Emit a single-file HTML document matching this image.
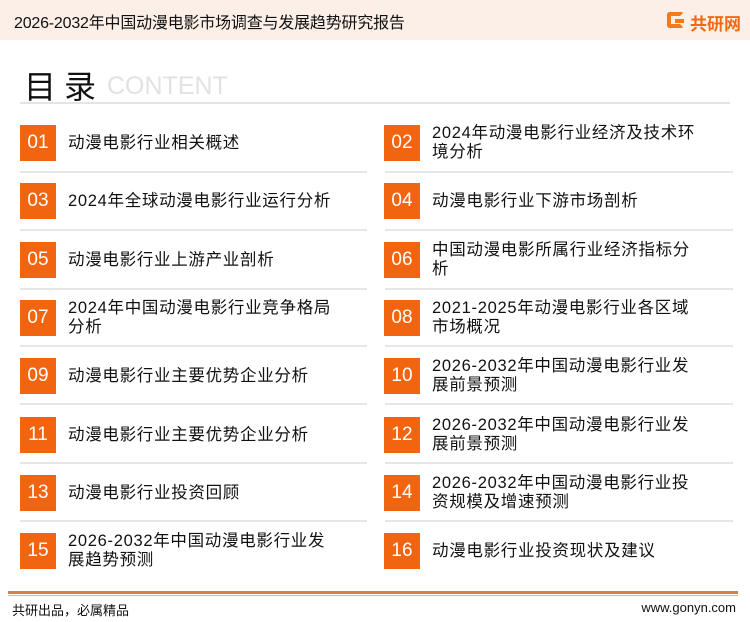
<!DOCTYPE html>
<html><head><meta charset="utf-8"><style>
*{margin:0;padding:0;box-sizing:border-box}
body{width:750px;height:622px;background:#fff;position:relative;overflow:hidden;font-family:"Liberation Sans","Noto Sans CJK SC",sans-serif;color:#111}
.hdr{position:absolute;left:0;top:0;width:750px;height:40px;background:#fcefe8}
.ttl{position:absolute;left:14px;top:9px;font-size:16px;letter-spacing:-0.2px}
.logo{position:absolute;left:690px;top:10px;font-size:17px;font-weight:bold;color:#f06a14}
.g{position:absolute;left:667px;top:12px;width:17px;height:16px;border:4px solid #f07a1c;border-radius:3px;border-right-color:transparent}
.g:after{content:"";position:absolute;left:4px;top:3px;width:9px;height:4px;background:#f07a1c}
.ml{position:absolute;left:24px;top:62px;font-size:32px;letter-spacing:8px}
.ct{position:absolute;left:107px;top:72px;font-size:25px;color:#e2e2e2}
.hl{position:absolute;left:20px;top:102px;width:710px;height:2px;background:#e4e4e4}
.box{position:absolute;width:36px;height:36px;background:#f26510;color:#fff;font-size:19px;text-align:center;line-height:36px}
.tx{position:absolute;font-size:16.5px;line-height:19px;width:270px;letter-spacing:0.7px}
.sep{position:absolute;height:2px;background:#e6e6e6}
.fl{position:absolute;left:8px;top:591px;width:730px;height:3px;background:#d4824a}
.fl2{position:absolute;left:8px;top:595px;width:730px;height:1px;background:#e8b892}
.ft{position:absolute;left:12px;top:600px;font-size:13px}
.fr{position:absolute;right:14px;top:600px;font-size:13px}
</style></head><body>
<div class="hdr"></div>
<div class="ttl">2026-2032年中国动漫电影市场调查与发展趋势研究报告</div>
<div class="g"></div><div class="logo">共研网</div>
<div class="ml">目录</div><div class="ct">CONTENT</div>
<div class="hl"></div>

<div class="box" style="left:20px;top:125px">01</div><div class="tx" style="left:68px;top:134px">动漫电影行业相关概述</div>
<div class="box" style="left:384px;top:125px">02</div><div class="tx" style="left:432px;top:124px">2024年动漫电影行业经济及技术环境分析</div>
<div class="sep" style="left:20px;width:347px;top:171px"></div><div class="sep" style="left:385px;width:348px;top:171px"></div>

<div class="box" style="left:20px;top:183px">03</div><div class="tx" style="left:68px;top:192px">2024年全球动漫电影行业运行分析</div>
<div class="box" style="left:384px;top:183px">04</div><div class="tx" style="left:432px;top:192px">动漫电影行业下游市场剖析</div>
<div class="sep" style="left:20px;width:347px;top:229px"></div><div class="sep" style="left:385px;width:348px;top:229px"></div>

<div class="box" style="left:20px;top:242px">05</div><div class="tx" style="left:68px;top:251px">动漫电影行业上游产业剖析</div>
<div class="box" style="left:384px;top:242px">06</div><div class="tx" style="left:432px;top:241px">中国动漫电影所属行业经济指标分析</div>
<div class="sep" style="left:20px;width:347px;top:288px"></div><div class="sep" style="left:385px;width:348px;top:288px"></div>

<div class="box" style="left:20px;top:300px">07</div><div class="tx" style="left:68px;top:299px">2024年中国动漫电影行业竞争格局分析</div>
<div class="box" style="left:384px;top:300px">08</div><div class="tx" style="left:432px;top:299px">2021-2025年动漫电影行业各区域市场概况</div>
<div class="sep" style="left:20px;width:347px;top:345px"></div><div class="sep" style="left:385px;width:348px;top:345px"></div>

<div class="box" style="left:20px;top:358px">09</div><div class="tx" style="left:68px;top:367px">动漫电影行业主要优势企业分析</div>
<div class="box" style="left:384px;top:358px">10</div><div class="tx" style="left:432px;top:357px">2026-2032年中国动漫电影行业发展前景预测</div>
<div class="sep" style="left:20px;width:347px;top:403px"></div><div class="sep" style="left:385px;width:348px;top:403px"></div>

<div class="box" style="left:20px;top:417px">11</div><div class="tx" style="left:68px;top:426px">动漫电影行业主要优势企业分析</div>
<div class="box" style="left:384px;top:417px">12</div><div class="tx" style="left:432px;top:416px">2026-2032年中国动漫电影行业发展前景预测</div>
<div class="sep" style="left:20px;width:347px;top:462px"></div><div class="sep" style="left:385px;width:348px;top:462px"></div>

<div class="box" style="left:20px;top:475px">13</div><div class="tx" style="left:68px;top:484px">动漫电影行业投资回顾</div>
<div class="box" style="left:384px;top:475px">14</div><div class="tx" style="left:432px;top:474px">2026-2032年中国动漫电影行业投资规模及增速预测</div>
<div class="sep" style="left:20px;width:347px;top:520px"></div><div class="sep" style="left:385px;width:348px;top:520px"></div>

<div class="box" style="left:20px;top:533px">15</div><div class="tx" style="left:68px;top:532px">2026-2032年中国动漫电影行业发展趋势预测</div>
<div class="box" style="left:384px;top:533px">16</div><div class="tx" style="left:432px;top:542px">动漫电影行业投资现状及建议</div>

<div class="fl"></div><div class="fl2"></div>
<div class="ft">共研出品，必属精品</div>
<div class="fr">www.gonyn.com</div>
</body></html>
